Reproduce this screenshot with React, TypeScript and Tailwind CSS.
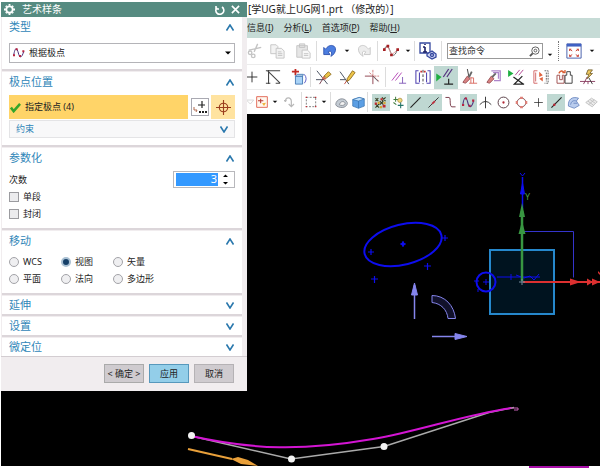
import { useState, type ReactNode } from "react";

interface Tool {
  name: string;
  art: ReactNode;
  active?: boolean;
}

const caret = <path d="M4 6h10l-5 5z" fill="#111" stroke="none" />;

const icons = {
  cut: (
    <g stroke="#c4c4c4" strokeWidth="1.5">
      <path d="M12 1 8 10M2 8l14-3" />
      <circle cx="3.500" cy="11" r="2" />
      <circle cx="7" cy="14.500" r="2" />
    </g>
  ),
  copy: (
    <g stroke="#c2c2c2" fill="#f3f3f3">
      <path d="M2 2h6l2 2v8H2z" />
      <path d="M8 6h6l3 3v8H8zM10 10h4M10 12h5M10 14h5" />
    </g>
  ),
  paste: (
    <g stroke="#c2c2c2" fill="#e6e6e6">
      <path d="M2 3h12v13H2zM5 1h6v4H5z" />
      <path d="M8 8h6l3 3v6H8zM10 12h5M10 14h5" fill="#f8f8f8" />
    </g>
  ),
  undo: (
    <g stroke="#2c50ad">
      <path d="M2 5v8h7l-2-3c3-2 5 0 3 5 6-3 7-11 2-12-3-1-6 1-8 4z" fill="#4c7ee0" />
    </g>
  ),
  redo: (
    <path d="M16 5v8H9l2-3c-3-2-5 0-3 5-6-3-7-11-2-12 3-1 6 1 8 4z" fill="#ededed" stroke="#c6c6c6" />
  ),
  spline: (
    <g>
      <path d="M1 9C3 1 6 3 8 9s5 7 8-1" stroke="#555" />
      <path d="m1 8 4-4 5 9 6-5" stroke="#e19a9a" />
      <path d="M0 6h3v3H0zM4 2h3v3H4zM8 12h3v3H8zM15 6h3v3h-3z" fill="#a51f22" stroke="none" />
    </g>
  ),
  info: (
    <g stroke="#35489e" strokeWidth="1.3">
      <path d="M1 1h10v10H1z" fill="#fff" />
      <path d="M6 2v1M6 5v5M4 5h2M4 10h4" stroke="#1b1f66" strokeWidth="1.600" />
      <path d="m8 12 5-3 4 3v3l-4 2-5-3z" fill="#cdd4f3" />
      <circle cx="13" cy="13" r="1.500" />
    </g>
  ),
  fit: (
    <g>
      <path d="M1 1h16v16H1z" fill="#fff" stroke="#3954a5" />
      <path d="M1 1h16v3H1z" fill="#3f61c4" stroke="none" />
      <path d="m4 7 3 2M14 7l-3 2M4 15l3-2M14 15l-3-2M4 9V7h2M14 9V7h-2M4 13v2h2M14 13v2h-2" stroke="#c83a2b" />
    </g>
  ),
  plus: <path d="M9 3v12M3 9h12" stroke="#222" />,
  corner: <path d="M1 2h16M4 1v16M1 16h5M3 2l14 14M12 16h5" stroke="#444" strokeWidth="1.200" />,
  offset: (
    <g>
      <path d="M5 0v7M1 3h8" stroke="#c12a24" strokeWidth="2" />
      <path d="M5 8h8v9H5z" fill="#a9d3f7" stroke="#4378b2" />
      <path d="m5 8 2-2h7l-1 2z" fill="#d8ecfc" stroke="#4378b2" />
      <path d="M15 6q4 5 0 10" stroke="#4e50c0" />
    </g>
  ),
  trim: (
    <g>
      <path d="m1 2 12 15M0 12h9" stroke="#384252" />
      <path d="M9 9 4 17" stroke="#713545" />
      <path d="m9 8 5-5 3 3-5 4z" fill="#edc448" stroke="#8e6d21" />
      <path d="m8 8 4 3-2 1-3-1z" fill="#d06b4e" stroke="none" />
    </g>
  ),
  extend: (
    <g>
      <path d="m0 3 10 14M0 12h6" stroke="#384252" />
      <path d="m9 11-4 6" stroke="#bb3f35" />
      <path d="m8 11 6-9 3 2-6 8-3 2z" fill="#edc448" stroke="#8e6d21" />
    </g>
  ),
  makeCorner: (
    <g>
      <path d="M1 8h9v9" stroke="#883745" />
      <path d="M10 1v7h7M6 4l11 10" stroke="#cc7474" strokeDasharray="3 1" />
      <path d="m10 8 6 6" stroke="#48434d" />
    </g>
  ),
  parallel: (
    <g stroke="#b03cb1">
      <path d="m1 13 7-9M5 13l7-9" />
      <path d="M9 16h8M13 9v7" stroke="#7e55b6" />
    </g>
  ),
  symmetry: (
    <g>
      <path d="M4 2H1v14h4M14 2h3v14h-4M5 4v11M13 4v11" stroke="#5447b2" strokeWidth="1.200" />
      <path d="M9 1v16" stroke="#333" strokeDasharray="3 2" />
      <path d="M6 3h2M10 3h2" stroke="#c93636" strokeWidth="2" />
    </g>
  ),
  constrain: (
    <g>
      <path d="m-2 5 6 4-6 5z" fill="#1fae41" stroke="none" />
      <path d="m6 9 6-9M10 9l6-9" stroke="#563380" strokeWidth="1.400" />
      <path d="M7 17h10M12 11v6" stroke="#222" strokeWidth="1.300" />
    </g>
  ),
  dimension: (
    <g>
      <path d="m6 0 2 10" stroke="#333" />
      <path d="m1 15 5-7 3 3-5 5z" fill="#d98282" stroke="#965056" />
      <path d="m8 9 3-6" stroke="#666" strokeWidth="2" />
      <path d="M10 9v7M8 16h9M10 10h3v6" stroke="#d8645b" />
    </g>
  ),
  pattern: (
    <g>
      <path d="M6 2h10v11H9M8 4h6v7" stroke="#ad85ca" strokeWidth="1.400" />
      <path d="m1 15 5-7 3 3-5 5z" fill="#d98282" stroke="#965056" />
      <path d="m7 9 4-4" stroke="#666" strokeWidth="2" />
    </g>
  ),
  autoConstrain: (
    <g>
      <path d="m-1 1 6 4-6 4z" fill="#1fae41" stroke="none" />
      <path d="m7 7 5-6M11 7l5-6" stroke="#ad378c" />
      <path d="m5 9 11 8M15 8 6 17h11" stroke="#222" strokeWidth="1.400" />
    </g>
  ),
  mirror: (
    <g>
      <path d="M5 2H1v14h4M3 4v10" stroke="#d05c5c" />
      <path d="M13 2h4v14h-4M15 4v10" stroke="#555" strokeDasharray="2 1" />
      <path d="m7 3 4 4-4 2zM11 9v5l-4-3z" fill="#df623d" stroke="none" />
    </g>
  ),
  convert: (
    <g>
      <path d="M0 7h3v5h3V7h2v9H0z" stroke="#9a4545" />
      <path d="M9 16V7h2V3h4v4h2v9z" stroke="#333" />
      <path d="M2 5q3-5 6-1M9 1v3H6" stroke="#d95b30" strokeWidth="1.500" />
    </g>
  ),
  infer: (
    <g>
      <path d="M0 14h17M8 9 4 17M9 14v3" stroke="#843559" />
      <path d="m9 1-2 5h3l-2 5 6-6h-3l3-4z" fill="#efc95f" stroke="#796330" />
      <path d="m10 10 4 7" stroke="#333" />
    </g>
  ),
  filter: <path d="m2 6 6 6 5-6z" stroke="#c7c7c7" />,
  snapBox: (
    <g>
      <path d="M1 1h16v16H1z" fill="#fff8ef" stroke="#df5846" strokeWidth="1.300" />
      <path d="M7 4v7M3 7h8" stroke="#b83732" strokeWidth="1.600" />
      <path d="m9 11 3 4 3-5z" fill="#efb23b" stroke="none" />
    </g>
  ),
  rotate: <path d="M2 9C2 1 11 1 11 8v8m-4-4 4 4 4-4M0 7h4" stroke="#b9b9b9" strokeWidth="1.800" />,
  marquee: (
    <g>
      <path d="M2 2h14v14H2z" stroke="#4a4a4a" strokeDasharray="3 2" />
      <path d="M1 1h2v2H1zM15 1h2v2h-2zM1 15h2v2H1zM15 15h2v2h-2z" fill="#c22f35" stroke="none" />
    </g>
  ),
  shell: (
    <g stroke="#737983">
      <path d="M1 12c0-8 12-12 16-3 1 4-4 7-7 7s-8-1-9-4z" fill="#c3cbd3" />
      <path d="M6 12c1-5 8-6 8-1 0 2-6 3-8 1z" fill="#f4f4f4" />
    </g>
  ),
  cube: (
    <g stroke="#3772af">
      <path d="m1 5 9-3 7 2v10l-8 3-8-3z" fill="#5c9fe4" />
      <path d="m1 5 8 2 8-3-7-2z" fill="#c2e2fc" />
      <path d="M9 7v10" />
    </g>
  ),
  points: (
    <g>
      <path d="m2 3 4 4m0-4L2 7M11 2l5 5m0-5-5 5M8 7l5 5m0-5-5 5M2 11l5 5m0-5-5 5" stroke="#353d20" strokeWidth="1.500" />
      <path d="M1 9h3v3H1zM9 3h3v3H9zM12 12h4v4h-4z" fill="#c1282d" stroke="none" />
      <path d="M5 8h3v3H5zM13 8h3v3h-3zM8 14h3v3H8z" fill="#d5a62f" stroke="none" />
    </g>
  ),
  snap: (
    <g>
      <path d="M5 1v7M2 5h7M2 9l4 3" stroke="#427d3f" strokeWidth="1.400" />
      <circle cx="11" cy="6" r="3" fill="#f1db7d" stroke="#a5893c" />
      <path d="M8 13h8M12 9v8" stroke="#26756a" strokeWidth="1.500" />
    </g>
  ),
  line: <path d="M2 16 16 2" stroke="#222" strokeWidth="1.500" />,
  midLine: (
    <g>
      <path d="M2 16 16 2" stroke="#333" strokeWidth="1.300" />
      <path d="m7 11 4-4" stroke="#ba2e3c" strokeWidth="2.500" />
    </g>
  ),
  curve: <path d="M2 2h5c3 0 0 13 4 13h5" stroke="#743544" strokeWidth="1.300" />,
  pole: (
    <g>
      <path d="M1 13C3-1 6 1 8 9s5 8 8-2" stroke="#4d327e" strokeWidth="1.500" />
      <path d="M0 11h3v3H0zM4 2h3v3H4zM9 12h3v3H9zM14 5h3v3h-3z" fill="#b82341" stroke="none" />
    </g>
  ),
  intersect: <path d="M1 12q8-9 16 0M9 1v16" stroke="#333" strokeWidth="1.300" />,
  center: (
    <g>
      <circle cx="9" cy="9" r="7.500" stroke="#553b43" strokeWidth="1.300" />
      <circle cx="9" cy="9" r="1.600" fill="#b22937" stroke="none" />
    </g>
  ),
  quadrant: (
    <g>
      <circle cx="9" cy="9" r="6" stroke="#744044" strokeWidth="1.300" />
      <path d="M7 1h4v3H7zM7 14h4v3H7zM1 7h3v4H1zM14 7h3v4h-3z" fill="#df8179" stroke="none" />
    </g>
  ),
  onCurve: (
    <g>
      <path d="M2 16 16 2" stroke="#222" strokeWidth="1.500" />
      <circle cx="6" cy="12" r="1.700" fill="#bc2636" stroke="none" />
    </g>
  ),
  face: (
    <g stroke="#5777b6">
      <path d="M2 14C1 5 7 0 16 3l-3 4 4 6-7 4z" fill="#b9cced" />
      <path d="M5 12c1-6 5-6 8-5M9 10h5" />
    </g>
  ),
  mesh: <path d="m1 9 8-6 8 5-7 7zM4 7l8 6M7 5l7 5M5 12l8-7" stroke="#b5b5b5" fill="#ececec" />,
};

const trimTools: Tool[] = [
  { name: "快速修剪", art: icons.trim },
  { name: "快速延伸", art: icons.extend },
  { name: "制作拐角", art: icons.makeCorner },
];

const constraintTools: Tool[] = [
  { name: "几何约束", art: icons.parallel },
  { name: "设为对称", art: icons.symmetry },
  { name: "显示约束", art: icons.constrain, active: true },
  { name: "快速尺寸", art: icons.dimension },
  { name: "阵列曲线", art: icons.pattern },
  { name: "自动约束", art: icons.autoConstrain },
  { name: "镜像曲线", art: icons.mirror },
  { name: "转换参考", art: icons.convert },
  { name: "推断约束", art: icons.infer },
];

const snapTools: Tool[] = [
  { name: "启用捕捉点", art: icons.points, active: true },
  { name: "清除捕捉点", art: icons.snap },
  { name: "端点", art: icons.line, active: true },
  { name: "中点", art: icons.midLine, active: true },
  { name: "控制点", art: icons.curve },
  { name: "极点", art: icons.pole, active: true },
  { name: "交点", art: icons.intersect },
  { name: "圆弧中心", art: icons.center },
  { name: "象限点", art: icons.quadrant },
  { name: "现有点", art: icons.plus },
  { name: "点在曲线上", art: icons.onCurve, active: true },
  { name: "点在面上", art: icons.face },
  { name: "有界栅格", art: icons.mesh },
];

const menus = [
  { label: "信息", hotkey: "I" },
  { label: "分析", hotkey: "L" },
  { label: "首选项", hotkey: "P" },
  { label: "帮助", hotkey: "H" },
];

const moveModes = ["WCS", "视图", "矢量", "平面", "法向", "多边形"];

function ToolButton({ tool, className = "w-6", size = "size-4" }: { tool: Tool; className?: string; size?: string }) {
  return (
    <button
      type="button"
      aria-label={tool.name}
      className={`flex h-full shrink-0 items-center justify-center ${tool.active ? "bg-[#bfd8d2]" : ""} ${className}`}
    >
      <svg viewBox="0 0 18 18" fill="none" className={`shrink-0 overflow-visible ${size}`}>
        {tool.art}
      </svg>
    </button>
  );
}

function Caret({ name, className = "w-[10px]" }: { name: string; className?: string }) {
  return <ToolButton tool={{ name, art: caret }} className={className} size="size-2" />;
}

function Divider() {
  return <span className="mx-px h-5 w-px shrink-0 bg-[#dcdcdc]" />;
}

function Chevron({ open }: { open: boolean }) {
  return (
    <svg viewBox="0 0 8 7" fill="none" className="h-[7px] w-2" stroke="#2a78ad" strokeWidth="1.600">
      <path d={open ? "M0.500 6.500 4 1l3.500 5.500" : "M0.500 0.500 4 6l3.500-5.500"} />
    </svg>
  );
}

function Section({ title, children }: { title: string; children?: ReactNode }) {
  return (
    <section className="border-b-2 border-[#dcd6da] bg-white px-[7px] last:border-b-0">
      <button
        type="button"
        className={`flex w-full items-center justify-between pr-px text-[11px] text-[#2f86b8] ${children ? "h-5" : "h-[18px]"}`}
      >
        {title}
        <Chevron open={!!children} />
      </button>
      {children}
    </section>
  );
}

function SplineDialog() {
  const [degree, setDegree] = useState("3");
  const [mode, setMode] = useState("视图");

  return (
    <div
      role="dialog"
      aria-label="艺术样条"
      className="absolute top-[2px] left-px w-[246px] bg-[#f1edef] text-[9px] text-[#222]"
    >
      <header className="flex h-[15px] items-center bg-[#568b81] pr-[7px] pl-[3px] text-[10px] text-white">
        <svg viewBox="0 0 12 12" fill="none" stroke="#fff" className="size-[11px]">
          <circle cx="6" cy="6" r="3.500" strokeWidth="2" />
          <path d="M6 0v2M6 10v2M0 6h2M10 6h2M2 2l1 1M9 9l1 1M2 10l1-1M9 3l1-1" strokeWidth="2" />
        </svg>
        <h1 className="ml-[7px] flex-1">艺术样条</h1>
        <button type="button" aria-label="重置" className="mr-[6px]">
          <svg viewBox="0 0 10 10" fill="none" stroke="#fff" strokeWidth="1.600" className="size-[10px]">
            <path d="M2 2.500a4 4 0 1 0 5-.5M1 1v3h3" />
          </svg>
        </button>
        <button type="button" aria-label="关闭">
          <svg viewBox="0 0 10 10" stroke="#fff" strokeWidth="1.800" className="size-[9px]">
            <path d="m1 1 8 8M9 1 1 9" />
          </svg>
        </button>
      </header>

      <div className="space-y-px pr-[5px] pl-px">
        <Section title="类型">
          <div className="relative mt-[6px] pb-[6px]">
            <select
              aria-label="类型"
              className="block h-5 w-full appearance-none border border-[#b4b4b8] bg-white pl-[19px] text-[9px]"
            >
              <option>根据极点</option>
              <option>通过点</option>
            </select>
            <svg viewBox="0 0 18 18" fill="none" className="pointer-events-none absolute top-1 left-1 size-3">
              {icons.pole}
            </svg>
            <svg viewBox="0 0 8 4" className="pointer-events-none absolute top-2 right-1 h-1 w-[6px]">
              <path d="M0 0h8L4 4z" />
            </svg>
          </div>
        </Section>

        <Section title="极点位置">
          <div className="mt-[3px] flex h-6 items-center">
            <button type="button" className="flex h-full flex-1 items-center gap-1 bg-[#ffd468] pl-px">
              <svg viewBox="0 0 12 12" fill="none" className="size-[11px]">
                <path d="m1 6 3 4 7-8" stroke="#35a52b" strokeWidth="2.800" />
              </svg>
              指定极点 (4)
            </button>
            <button type="button" aria-label="点对话框" className="mr-[2px] ml-[3px] border border-[#a9a9b2] bg-white">
              <svg viewBox="0 0 16 16" fill="none" className="size-4">
                <path d="M10 2v7M6 6h7" stroke="#222" strokeWidth="1.200" />
                <path d="M2 8v3h3l-1 2" stroke="#b16a4f" />
                <path d="M7 12h2v2H7zM10 12h2v2h-2zM13 12h2v2h-2z" fill="#222" />
              </svg>
            </button>
            <button type="button" aria-label="推断点" className="flex size-6 items-center justify-center bg-[#ffe3a0]">
              <svg viewBox="0 0 16 16" fill="none" stroke="#9b3d1e" strokeWidth="1.200" className="size-[15px]">
                <circle cx="8" cy="8" r="4.500" />
                <path d="M8 0v16M0 8h16" />
              </svg>
            </button>
          </div>
          <div className="pt-px pb-[7px]">
            <button
              type="button"
              className="flex h-[18px] w-full items-center justify-between border border-[#e4e4e6] bg-[#f8f8f9] px-[6px] text-[#2f86b8]"
            >
              约束
              <Chevron open={false} />
            </button>
          </div>
        </Section>

        <Section title="参数化">
          <div className="mt-[3px] flex h-[17px] items-center justify-between">
            <label htmlFor="degree">次数</label>
            <div className="flex h-[17px] w-[62px] items-center border border-[#b8b8bc] px-[2px]">
              <input
                id="degree"
                value={degree}
                onChange={(e) => setDegree(e.target.value)}
                className="h-[13px] w-[42px] bg-[#3399ff] pr-px text-right text-[11px] text-white outline-none"
              />
              <svg viewBox="0 0 6 12" className="mx-auto h-[11px] w-[5px]">
                <path d="M0 3h6L3 0zM0 9h6l-3 3z" />
              </svg>
            </div>
          </div>
          <div className="pb-[6px]">
            {["单段", "封闭"].map((name) => (
              <label key={name} className="flex h-[17px] items-center gap-1">
                <input
                  type="checkbox"
                  className="size-[10px] appearance-none border border-[#9b9b9f] bg-[#ececee] checked:bg-[#3399ff]"
                />
                {name}
              </label>
            ))}
          </div>
        </Section>

        <Section title="移动">
          <div className="grid w-[156px] grid-cols-3 pt-[2px] pb-[6px]">
            {moveModes.map((name) => (
              <label key={name} className="flex h-[17px] items-center gap-1 whitespace-nowrap">
                <input
                  type="radio"
                  name="move"
                  checked={mode === name}
                  onChange={() => setMode(name)}
                  className="size-[10px] shrink-0 appearance-none rounded-full border border-[#a3a3a8] bg-[#efeff1] checked:border-2 checked:border-[#a9c0d3] checked:bg-[#153f68]"
                />
                {name}
              </label>
            ))}
          </div>
        </Section>

        <Section title="延伸" />
        <Section title="设置" />
        <Section title="微定位" />
      </div>

      <footer className="flex justify-end gap-[5px] border-t border-[#d3cdd1] pt-[7px] pr-[13px] pb-2">
        <button type="button" className="h-[19px] w-10 border border-[#aaa] bg-[#cfcbcf]">
          &lt; 确定 &gt;
        </button>
        <button type="button" className="h-[19px] w-10 border border-[#5798bc] bg-[#93cee9]">
          应用
        </button>
        <button type="button" className="h-[19px] w-10 border border-[#b5b2b5] bg-[#cfcbcf]">
          取消
        </button>
      </footer>
    </div>
  );
}

function Toolbars() {
  return (
    <div className="ml-[246px] overflow-hidden">
      <h2 className="h-[18px] pl-px text-[10px] leading-[18px] whitespace-nowrap text-[#222]">
        [学UG就上UG网1.prt （修改的）]
      </h2>
      <nav className="flex h-5 items-center gap-[10px] bg-[#c6dbd6] text-[9px] whitespace-nowrap text-[#222]">
        {menus.map((menu) => (
          <button key={menu.label} type="button">
            {menu.label}(<u>{menu.hotkey}</u>)
          </button>
        ))}
      </nav>

      <div className="flex h-[27px] items-center border-b border-[#ececec]">
        <ToolButton tool={{ name: "剪切", art: icons.cut }} className="w-4" />
        <ToolButton tool={{ name: "复制", art: icons.copy }} className="w-7" />
        <ToolButton tool={{ name: "粘贴", art: icons.paste }} />
        <Divider />
        <ToolButton tool={{ name: "撤消", art: icons.undo }} />
        <Caret name="撤消列表" />
        <ToolButton tool={{ name: "重做", art: icons.redo }} />
        <Divider />
        <ToolButton tool={{ name: "艺术样条", art: icons.spline }} />
        <Caret name="曲线列表" />
        <Divider />
        <ToolButton tool={{ name: "信息窗口", art: icons.info }} size="size-[18px]" />
        <Divider />
        <div className="ml-1 flex h-4 min-w-24 flex-1 items-center border border-[#999] bg-white pr-[2px]">
          <input
            aria-label="查找命令"
            placeholder="查找命令"
            className="w-0 flex-1 pl-px text-[9px] outline-none placeholder:text-[#333]"
          />
          <svg viewBox="0 0 12 12" fill="none" stroke="#555" className="size-[11px]">
            <circle cx="7" cy="5" r="4" />
            <circle cx="7" cy="5" r="1.500" />
            <path d="M4 8 1 11" strokeWidth="2" />
          </svg>
        </div>
        <Caret name="查找选项" className="w-[14px] pt-2" />
        <span className="mx-px h-5 shrink-0 border-l border-dotted border-[#777]" />
        <ToolButton tool={{ name: "适合窗口", art: icons.fit }} className="w-7" />
        <Caret name="视图列表" className="w-2" />
        <span className="w-[6px] shrink-0" />
      </div>

      <div className="flex h-[25px] items-center border-b border-[#ececec]">
        <ToolButton tool={{ name: "点", art: icons.plus }} className="w-[10px]" />
        <ToolButton tool={{ name: "轮廓", art: icons.corner }} className="w-8" />
        <ToolButton tool={{ name: "偏置曲线", art: icons.offset }} className="w-5" />
        <Divider />
        {trimTools.map((tool) => (
          <ToolButton key={tool.name} tool={tool} />
        ))}
        <Divider />
        <div className="flex h-[23px] flex-1">
          {constraintTools.map((tool) => (
            <ToolButton key={tool.name} tool={tool} className="flex-1" />
          ))}
        </div>
      </div>

      <div className="flex h-6 items-center">
        <ToolButton tool={{ name: "过滤器", art: icons.filter }} className="w-[7px]" size="size-3" />
        <ToolButton tool={{ name: "捕捉设置", art: icons.snapBox }} className="w-4" size="size-3" />
        <Caret name="捕捉列表" />
        <ToolButton tool={{ name: "旋转", art: icons.rotate }} className="w-5" size="size-3" />
        <Divider />
        <ToolButton tool={{ name: "矩形选择", art: icons.marquee }} className="w-4" size="size-3" />
        <Caret name="选择列表" />
        <Divider />
        <ToolButton tool={{ name: "片体", art: icons.shell }} className="w-[18px]" size="size-[13px]" />
        <ToolButton tool={{ name: "实体", art: icons.cube }} className="w-4" size="size-[13px]" />
        <Divider />
        <div className="ml-[3px] flex h-[17px] flex-1">
          {snapTools.map((tool) => (
            <ToolButton key={tool.name} tool={tool} className="flex-1" size="size-[13px]" />
          ))}
        </div>
      </div>
    </div>
  );
}

function Viewport() {
  return (
    <svg viewBox="1 114 599 354" className="block w-full bg-black" fill="none" role="img" aria-label="草图">
      {/* sketch ellipse and its poles */}
      <g stroke="#0d0dee">
        <ellipse cx="403" cy="244.500" rx="39.500" ry="20" transform="rotate(-14 403 244.500)" strokeWidth="2" />
        <path
          d="M400 244h6M403 241v6M368 252h6M371 249v6M371 279h7M374.500 276v7M424 266h7M427.500 263v7M442 238h6M445 235v6"
          strokeWidth="1.200"
        />
        <circle cx="403" cy="244" r="1.500" fill="#0d0dee" />
      </g>

      {/* move and rotate handles */}
      <g fill="#8585ec" stroke="#8585ec">
        <path d="M414.500 319v-34" strokeWidth="1.500" />
        <path d="m414.500 283 3 12h-6z" />
        <path d="M432 336.500h30" strokeWidth="1.500" />
        <path d="m467 336.500-12-3v6z" />
        <path d="M432 295.500c13 0 22 10 23.500 23H448c-1-9-7-15-16-16z" fill="#11112b" />
      </g>

      {/* datum plane */}
      <rect x="490" y="250" width="64" height="64" fill="#00131f" stroke="#2688cc" strokeWidth="2" />
      <path d="M524 231.500h49.500v46" stroke="#3434cc" />
      <g stroke="#0d0dee">
        <circle cx="486" cy="282" r="9.500" strokeWidth="2" />
        <path d="M483 282h6M486 279v6M474 281h5M478 289v3M497 277h10M507 277h33M511 274v6M516 275l8 3 6-2 4 4 5-6" />
        <path d="M522.500 209v-32" strokeWidth="1.500" />
        <path d="m522.500 183 2 11h-4z" fill="#0d0dee" />
        <path d="m520 173 2.500 3 2.500-3" />
      </g>
      <g stroke="#389641" fill="#389641">
        <path d="M522 281v-70" strokeWidth="2.500" />
        <path d="m522 203 3 14h-6zM522 221l3.500 13h-7z" stroke="none" />
      </g>
      <text x="525" y="200" fill="#4d9e45" className="text-[9px]">
        Y
      </text>
      <g fill="#dc3030">
        <path d="M523 282h77" stroke="#dc3030" strokeWidth="2" />
        <path d="m570 278.500 11 3.500-11 3.500zM587 278.500l6 3.500-6 3.500zM592 278.500l8 3.500-8 3.500zM598 271l2 2v2l-2-2z" />
      </g>
      <path d="M519 282h6M522 279v6" stroke="#7990a1" />

      {/* spline with its control polygon */}
      <path d="m191 436 100 23 93-12.500 105-34 25-5" stroke="#aaa" strokeWidth="1.500" />
      <path d="M191 436c63 14 112 15 182 3 47-8 90-24 138-31" stroke="#d315d3" strokeWidth="2" />
      <path d="M510 408h8v2h-4" stroke="#c862b8" />
      <g fill="#f2f2f2">
        <circle cx="191.500" cy="435.500" r="3.500" />
        <circle cx="291.500" cy="459" r="3.500" />
        <circle cx="384" cy="446.500" r="3.500" />
      </g>
      <path d="m188 449 44 10" stroke="#e9a03a" strokeWidth="2" />
      <path d="m231 459 7-2 10 3 10 6-17-2z" fill="#e9a03a" />
      <path d="M1 466h599v2H1z" fill="#fff" />
      <path d="M529 466h60v2h-60z" fill="#a70fa7" />
    </svg>
  );
}

export default function App() {
  return (
    <main className="relative bg-white pl-px font-['Noto_Sans','Noto_Sans_CJK_SC',sans-serif]">
      <Toolbars />
      <Viewport />
      <SplineDialog />
    </main>
  );
}
